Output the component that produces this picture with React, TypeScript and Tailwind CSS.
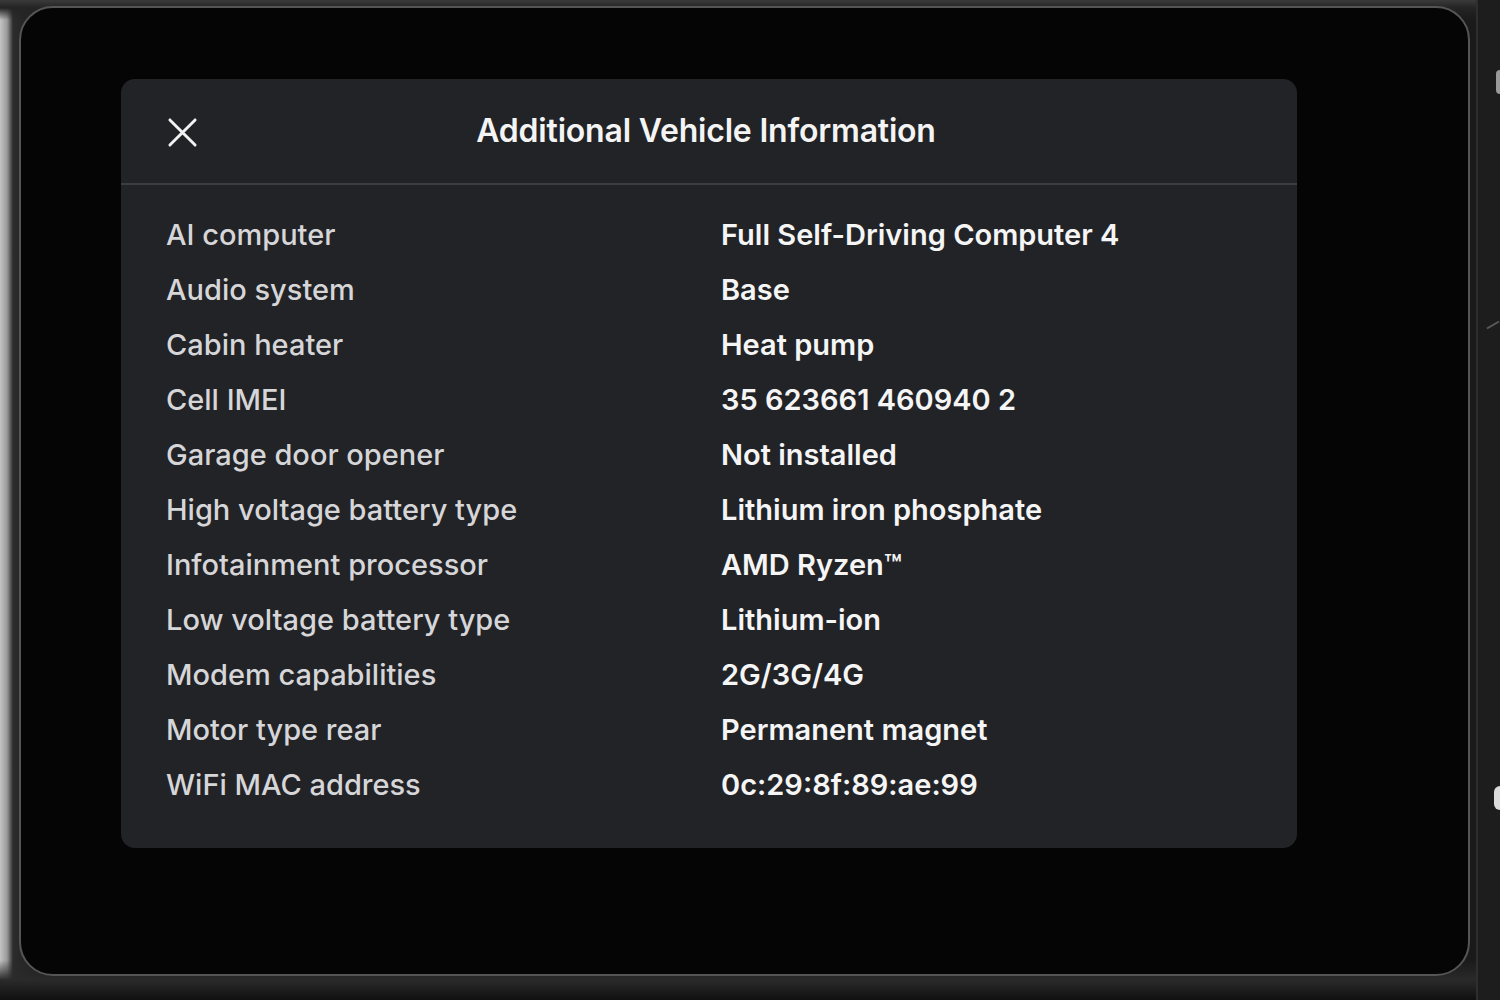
import React from 'react';

interface InfoRow {
  label: string;
  value: string;
}

const rows: InfoRow[] = [
  { label: 'AI computer', value: 'Full Self-Driving Computer 4' },
  { label: 'Audio system', value: 'Base' },
  { label: 'Cabin heater', value: 'Heat pump' },
  { label: 'Cell IMEI', value: '35 623661 460940 2' },
  { label: 'Garage door opener', value: 'Not installed' },
  { label: 'High voltage battery type', value: 'Lithium iron phosphate' },
  { label: 'Infotainment processor', value: 'AMD Ryzen™' },
  { label: 'Low voltage battery type', value: 'Lithium-ion' },
  { label: 'Modem capabilities', value: '2G/3G/4G' },
  { label: 'Motor type rear', value: 'Permanent magnet' },
  { label: 'WiFi MAC address', value: '0c:29:8f:89:ae:99' },
];

const CloseIcon = () => (
  <svg width="31" height="31" viewBox="0 0 32 32" fill="none">
    <path d="M3 3L29 29M29 3L3 29" stroke="#f2f2f2" strokeWidth="3" strokeLinecap="round" />
  </svg>
);

const App: React.FC = () => {
  return (
    <div
      className="w-[1500px] h-[1000px] flex bg-[linear-gradient(90deg,#c4c4c4_0px,#9a9a9a_7px,#2c2c2c_13px,#1c1c1c_40px,#1a1a1a_100%)] overflow-hidden"
      style={{ fontFamily: 'Inter, "Noto Sans", sans-serif' }}
    >
      {/* display bezel */}
      <div className="flex-1 pt-[6px] pb-[24px] pl-[19px] pr-[6px] bg-[linear-gradient(180deg,#3a3a3a_0px,#242424_8px,transparent_20px,transparent_96%,#2a2a2a_98%,#101010_100%)]">
        <div className="h-full rounded-[34px] border-2 border-[#555555] bg-[#050505] pt-[71px] pl-[100px]">
          <div className="w-[1176px] h-[769px] rounded-[14px] bg-[#222327] flex flex-col">
            <div className="relative h-[106px] flex items-center justify-center border-b-2 border-[#3c3d41]">
              <button className="absolute left-[46px] top-[38px]">
                <CloseIcon />
              </button>
              <h1 className="text-[32px] font-semibold text-[#f4f4f4] tracking-[-0.2px] pr-[6px]">
                Additional Vehicle Information
              </h1>
            </div>
            <div className="pt-[22px] pl-[45px] flex flex-col">
              {rows.map((row) => (
                <div key={row.label} className="grid grid-cols-[555px_1fr] h-[55px] items-center">
                  <span className="text-[29px] font-medium text-[#d6d6d8]">{row.label}</span>
                  <span className="text-[29px] font-semibold text-[#f5f5f5]">{row.value}</span>
                </div>
              ))}
            </div>
          </div>
        </div>
      </div>
      {/* side panel beside the display */}
      <div className="w-[24px] bg-[#1d1d1e] border-l-2 border-[#2e2e2e] flex flex-col items-end">
        <div className="mt-[70px] w-[4px] h-[24px] bg-[#9a9a9a] rounded-l-sm" />
        <div className="mt-[230px] w-[14px] h-[2px] bg-[#5a5a5a] rotate-[-30deg]" />
        <div className="mt-[460px] w-[6px] h-[24px] bg-[#dcdcdc] rounded-l-full" />
      </div>
    </div>
  );
};

export default App;
